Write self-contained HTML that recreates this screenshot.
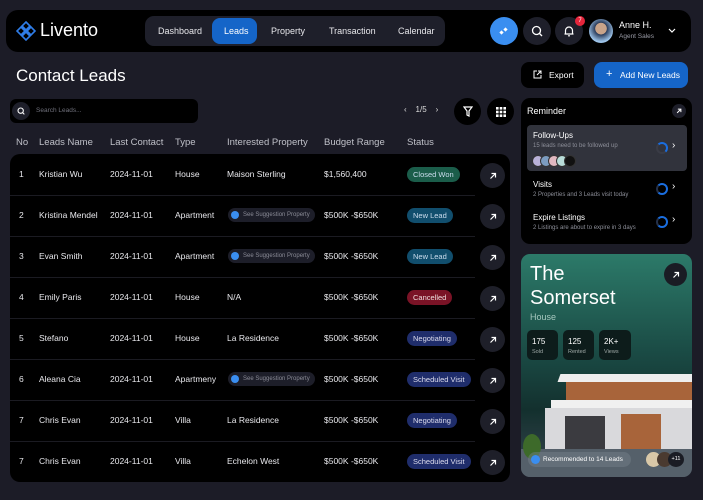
<!DOCTYPE html>
<html><head><meta charset="utf-8"><style>
*{box-sizing:border-box;margin:0;padding:0}
body{width:703px;height:500px;background:#1c1c27;font-family:"Liberation Sans",sans-serif;color:#fff;position:relative;overflow:hidden}
.a{position:absolute}
.top{left:6px;top:10px;width:685px;height:42px;background:#000;border-radius:12px}
.nav{left:145px;top:16px;width:300px;height:30px;background:#1e1f2a;border-radius:9px}
.nav span{position:absolute;top:0;line-height:30px;font-size:9px;color:#e6e6ea}
.circ{border-radius:50%;background:#1e1f2a;display:flex;align-items:center;justify-content:center}
.th{top:137px;font-size:9.5px;color:#bfc0c8}
.card{left:10px;top:154px;width:500px;height:328px;background:#000;border-radius:10px}
.row{position:absolute;left:10px;width:465px;height:41px;font-size:8.5px;color:#e8e8ec}
.row span{position:absolute;top:0;line-height:41px;white-space:nowrap}
.sep{position:absolute;left:10px;width:465px;height:1px;background:#1b1b22}
.row .badge{position:absolute;top:13px;height:15px;line-height:15px;border-radius:8px;padding:0 6px;font-size:7.5px}
.row .sug{position:absolute;top:13px;height:14px;border-radius:7px;background:#1d1e29;font-size:6px;color:#8a8b96;line-height:14px;padding:0 5px 0 15px}
.sug i{position:absolute;left:3px;top:3px;width:8px;height:8px;border-radius:50%;background:#3a8ef0}
.arr{position:absolute;left:480px;width:25px;height:25px;border-radius:50%;background:#1e1f29;display:flex;align-items:center;justify-content:center}
.ring{width:12px;height:12px;border-radius:50%;border:2px solid #1a6ee0}
</style></head><body>
<div class="a top"></div>
<svg class="a" style="left:16px;top:21px" width="20" height="20" viewBox="0 0 20 20" fill="none" stroke="#2f7de8" stroke-width="1.6"><path d="M10 1L14 5L10 9L6 5Z M5 6L9 10L5 14L1 10Z M15 6L19 10L15 14L11 10Z M10 11L14 15L10 19L6 15Z"/></svg>
<div class="a" style="left:40px;top:20px;font-size:18px;color:#fff">Livento</div>
<div class="a nav"><span style="left:13px">Dashboard</span>
<div class="a" style="left:67px;top:2px;width:45px;height:26px;background:#1565c8;border-radius:8px"></div>
<span style="left:79px;color:#fff">Leads</span><span style="left:126px">Property</span><span style="left:184px">Transaction</span><span style="left:253px">Calendar</span></div>
<div class="a circ" style="left:490px;top:17px;width:28px;height:28px;background:#3a8ef0"><svg width="10" height="10" viewBox="0 0 10 10" fill="#fff"><rect x="1" y="5" width="3" height="3" transform="rotate(45 2.5 6.5)"/><rect x="5" y="2" width="3" height="3" transform="rotate(45 6.5 3.5)"/></svg></div>
<div class="a circ" style="left:523px;top:17px;width:28px;height:28px"><svg width="12" height="12" viewBox="0 0 12 12" fill="none" stroke="#fff" stroke-width="1.3"><circle cx="5.5" cy="5.5" r="4"/><path d="M8.5 8.5L11 11"/></svg></div>
<div class="a circ" style="left:555px;top:17px;width:28px;height:28px"><svg width="12" height="12" viewBox="0 0 12 12" fill="none" stroke="#fff" stroke-width="1.2"><path d="M2.5 9V5.5a3.5 3.5 0 017 0V9zM1.5 9h9M5 10.8h2"/></svg></div>
<div class="a" style="left:575px;top:16px;width:10px;height:10px;border-radius:50%;background:#e5253b;font-size:6px;text-align:center;line-height:10px">7</div>
<div class="a" style="left:589px;top:19px;width:24px;height:24px;border-radius:50%;background:radial-gradient(circle at 50% 40%,#c9a48a 0 30%,#2a3b5a 32%,#9ec5ea 70%)"></div>
<div class="a" style="left:619px;top:20px;font-size:9px">Anne H.</div>
<div class="a" style="left:619px;top:33px;font-size:6.5px;color:#9a9ba6">Agent Sales</div>
<svg class="a" style="left:668px;top:28px" width="8" height="6" viewBox="0 0 8 6" fill="none" stroke="#fff" stroke-width="1.2"><path d="M1 1l3 3 3-3"/></svg>

<div class="a" style="left:16px;top:66px;font-size:17px">Contact Leads</div>
<div class="a" style="left:521px;top:62px;width:63px;height:26px;background:#000;border-radius:8px;font-size:8.5px;line-height:26px;padding-left:28px">Export</div>
<svg class="a" style="left:533px;top:70px" width="9" height="9" viewBox="0 0 9 9" fill="none" stroke="#fff" stroke-width="1"><path d="M4 1H1v7h7V5M5 1h3v3M8 1L4 5"/></svg>
<div class="a" style="left:594px;top:62px;width:94px;height:26px;background:#1565c8;border-radius:8px;font-size:8.5px;line-height:26px;padding-left:26px">Add New Leads</div>
<div class="a" style="left:606px;top:62px;font-size:11px;line-height:25px">+</div>

<div class="a" style="left:10px;top:99px;width:188px;height:24px;background:#000;border-radius:6px"></div>
<div class="a circ" style="left:12px;top:102px;width:18px;height:18px"><svg width="8" height="8" viewBox="0 0 12 12" fill="none" stroke="#fff" stroke-width="1.6"><circle cx="5.5" cy="5.5" r="4"/><path d="M8.5 8.5L11 11"/></svg></div>
<div class="a" style="left:36px;top:107px;font-size:6.5px;color:#70717c">Search Leads...</div>
<div class="a" style="left:404px;top:105px;font-size:8px;color:#ddd">‹&nbsp;&nbsp;&nbsp;&nbsp;1/5&nbsp;&nbsp;&nbsp;&nbsp;›</div>
<div class="a circ" style="left:454px;top:98px;width:27px;height:27px;background:#000"><svg width="10" height="11" viewBox="0 0 10 11" fill="none" stroke="#fff" stroke-width="1.2"><path d="M1 1h8L6 5v5L4 9V5z"/></svg></div>
<div class="a circ" style="left:487px;top:98px;width:27px;height:27px;background:#000"><svg width="10" height="10" viewBox="0 0 10 10" fill="#fff"><rect x="0" y="0" width="2.6" height="2.6"/><rect x="3.7" y="0" width="2.6" height="2.6"/><rect x="7.4" y="0" width="2.6" height="2.6"/><rect x="0" y="3.7" width="2.6" height="2.6"/><rect x="3.7" y="3.7" width="2.6" height="2.6"/><rect x="7.4" y="3.7" width="2.6" height="2.6"/><rect x="0" y="7.4" width="2.6" height="2.6"/><rect x="3.7" y="7.4" width="2.6" height="2.6"/><rect x="7.4" y="7.4" width="2.6" height="2.6"/></svg></div>

<div class="a th" style="left:16px">No</div><div class="a th" style="left:39px">Leads Name</div><div class="a th" style="left:110px">Last Contact</div><div class="a th" style="left:175px">Type</div><div class="a th" style="left:227px">Interested Property</div><div class="a th" style="left:324px">Budget Range</div><div class="a th" style="left:407px">Status</div>
<div class="a card"></div>

<div class="row" style="top:154px"><span style="left:9px">1</span><span style="left:29px">Kristian Wu</span><span style="left:100px">2024-11-01</span><span style="left:165px">House</span><span style="left:217px">Maison Sterling</span><span style="left:314px">$1,560,400</span><span class="badge" style="left:397px;background:#1b5d4a;color:#cde">Closed Won</span></div>
<div class="arr" style="top:163px"><svg width="8" height="8" viewBox="0 0 8 8" fill="none" stroke="#fff" stroke-width="1.2"><path d="M1.5 6.5L6.5 1.5M2.5 1.5h4v4"/></svg></div>
<div class="sep" style="top:195px"></div>
<div class="row" style="top:195px"><span style="left:9px">2</span><span style="left:29px">Kristina Mendel</span><span style="left:100px">2024-11-01</span><span style="left:165px">Apartment</span><span class="sug" style="left:218px"><i></i>See Suggestion Property</span><span style="left:314px">$500K -$650K</span><span class="badge" style="left:397px;background:#114e6d;color:#cde">New Lead</span></div>
<div class="arr" style="top:204px"><svg width="8" height="8" viewBox="0 0 8 8" fill="none" stroke="#fff" stroke-width="1.2"><path d="M1.5 6.5L6.5 1.5M2.5 1.5h4v4"/></svg></div>
<div class="sep" style="top:236px"></div>
<div class="row" style="top:236px"><span style="left:9px">3</span><span style="left:29px">Evan Smith</span><span style="left:100px">2024-11-01</span><span style="left:165px">Apartment</span><span class="sug" style="left:218px"><i></i>See Suggestion Property</span><span style="left:314px">$500K -$650K</span><span class="badge" style="left:397px;background:#114e6d;color:#cde">New Lead</span></div>
<div class="arr" style="top:245px"><svg width="8" height="8" viewBox="0 0 8 8" fill="none" stroke="#fff" stroke-width="1.2"><path d="M1.5 6.5L6.5 1.5M2.5 1.5h4v4"/></svg></div>
<div class="sep" style="top:277px"></div>
<div class="row" style="top:277px"><span style="left:9px">4</span><span style="left:29px">Emily Paris</span><span style="left:100px">2024-11-01</span><span style="left:165px">House</span><span style="left:217px">N/A</span><span style="left:314px">$500K -$650K</span><span class="badge" style="left:397px;background:#7a1326;color:#edd">Cancelled</span></div>
<div class="arr" style="top:286px"><svg width="8" height="8" viewBox="0 0 8 8" fill="none" stroke="#fff" stroke-width="1.2"><path d="M1.5 6.5L6.5 1.5M2.5 1.5h4v4"/></svg></div>
<div class="sep" style="top:318px"></div>
<div class="row" style="top:318px"><span style="left:9px">5</span><span style="left:29px">Stefano</span><span style="left:100px">2024-11-01</span><span style="left:165px">House</span><span style="left:217px">La Residence</span><span style="left:314px">$500K -$650K</span><span class="badge" style="left:397px;background:#1f2d6b;color:#dde">Negotiating</span></div>
<div class="arr" style="top:327px"><svg width="8" height="8" viewBox="0 0 8 8" fill="none" stroke="#fff" stroke-width="1.2"><path d="M1.5 6.5L6.5 1.5M2.5 1.5h4v4"/></svg></div>
<div class="sep" style="top:359px"></div>
<div class="row" style="top:359px"><span style="left:9px">6</span><span style="left:29px">Aleana Cia</span><span style="left:100px">2024-11-01</span><span style="left:165px">Apartmeny</span><span class="sug" style="left:218px"><i></i>See Suggestion Property</span><span style="left:314px">$500K -$650K</span><span class="badge" style="left:397px;background:#1f2d6b;color:#dde">Scheduled Visit</span></div>
<div class="arr" style="top:368px"><svg width="8" height="8" viewBox="0 0 8 8" fill="none" stroke="#fff" stroke-width="1.2"><path d="M1.5 6.5L6.5 1.5M2.5 1.5h4v4"/></svg></div>
<div class="sep" style="top:400px"></div>
<div class="row" style="top:400px"><span style="left:9px">7</span><span style="left:29px">Chris Evan</span><span style="left:100px">2024-11-01</span><span style="left:165px">Villa</span><span style="left:217px">La Residence</span><span style="left:314px">$500K -$650K</span><span class="badge" style="left:397px;background:#1f2d6b;color:#dde">Negotiating</span></div>
<div class="arr" style="top:409px"><svg width="8" height="8" viewBox="0 0 8 8" fill="none" stroke="#fff" stroke-width="1.2"><path d="M1.5 6.5L6.5 1.5M2.5 1.5h4v4"/></svg></div>
<div class="sep" style="top:441px"></div>
<div class="row" style="top:441px"><span style="left:9px">7</span><span style="left:29px">Chris Evan</span><span style="left:100px">2024-11-01</span><span style="left:165px">Villa</span><span style="left:217px">Echelon West</span><span style="left:314px">$500K -$650K</span><span class="badge" style="left:397px;background:#1f2d6b;color:#dde">Scheduled Visit</span></div>
<div class="arr" style="top:450px"><svg width="8" height="8" viewBox="0 0 8 8" fill="none" stroke="#fff" stroke-width="1.2"><path d="M1.5 6.5L6.5 1.5M2.5 1.5h4v4"/></svg></div>

<!-- Reminder -->
<div class="a" style="left:521px;top:98px;width:171px;height:146px;background:#000;border-radius:9px"></div>
<div class="a" style="left:527px;top:106px;font-size:9px">Reminder</div>
<div class="a circ" style="left:672px;top:104px;width:14px;height:14px"><svg width="6" height="6" viewBox="0 0 8 8" fill="none" stroke="#fff" stroke-width="1.4"><path d="M1.5 6.5L6.5 1.5M2.5 1.5h4v4"/></svg></div>
<div class="a" style="left:527px;top:125px;width:160px;height:46px;background:#31333c;border-radius:4px"></div>
<div class="a" style="left:533px;top:131px;font-size:8px">Follow-Ups</div>
<div class="a" style="left:533px;top:143px;font-size:6px;color:#8c8e98">15 leads need to be followed up</div>
<div class="a" style="left:532px;top:155px;width:60px;height:12px">
<i class="a" style="left:0;width:12px;height:12px;border-radius:50%;background:#b9b2d8;border:1px solid #333"></i>
<i class="a" style="left:8px;width:12px;height:12px;border-radius:50%;background:#7c9cc0;border:1px solid #333"></i>
<i class="a" style="left:16px;width:12px;height:12px;border-radius:50%;background:#e0b8c0;border:1px solid #333"></i>
<i class="a" style="left:24px;width:12px;height:12px;border-radius:50%;background:#b8dcd8;border:1px solid #333"></i>
<i class="a" style="left:32px;width:12px;height:12px;border-radius:50%;background:#111;border:1px solid #333"></i></div>
<div class="a ring" style="left:656px;top:142px;border-color:#1a6ee0 #1a6ee0 #3a3c46 #3a3c46"></div>
<div class="a" style="left:672px;top:140px;font-size:10px">›</div>
<div class="a" style="left:533px;top:180px;font-size:8px">Visits</div>
<div class="a" style="left:533px;top:192px;font-size:6px;color:#8c8e98">2 Properties and 3 Leads visit today</div>
<div class="a ring" style="left:656px;top:183px;border-color:#1a6ee0 #1a6ee0 #1a6ee0 #23304a"></div>
<div class="a" style="left:672px;top:181px;font-size:10px">›</div>
<div class="a" style="left:533px;top:213px;font-size:8px">Expire Listings</div>
<div class="a" style="left:533px;top:225px;font-size:6px;color:#8c8e98">2 Listings are about to expire in 3 days</div>
<div class="a ring" style="left:656px;top:216px;border-color:#1a6ee0 #1a6ee0 #1a6ee0 #23304a"></div>
<div class="a" style="left:672px;top:214px;font-size:10px">›</div>

<!-- Property card -->
<div class="a" style="left:521px;top:254px;width:171px;height:223px;border-radius:9px;overflow:hidden;background:linear-gradient(#2c7a69,#1a4a44 45%,#13302e 70%,#3a4650)">
<div class="a" style="left:38px;top:120px;width:135px;height:8px;background:#eee;transform:skewX(-20deg)"></div>
<div class="a" style="left:45px;top:128px;width:126px;height:18px;background:#a8643a"></div>
<div class="a" style="left:30px;top:146px;width:141px;height:8px;background:#f0f0f0"></div>
<div class="a" style="left:24px;top:154px;width:147px;height:45px;background:#d9d9dc"></div>
<div class="a" style="left:44px;top:162px;width:40px;height:37px;background:#3b3b40"></div>
<div class="a" style="left:100px;top:160px;width:40px;height:38px;background:#a8643a"></div>
<div class="a" style="left:0;top:195px;width:171px;height:28px;background:#55606a"></div>
<div class="a" style="left:2px;top:180px;width:18px;height:25px;border-radius:50%;background:#3d6a2a"></div>
</div>
<div class="a" style="left:530px;top:262px;font-size:20px;line-height:24px">The<br>Somerset</div>
<div class="a" style="left:530px;top:312px;font-size:9px;color:#a6c8bf">House</div>
<div class="a circ" style="left:664px;top:263px;width:23px;height:23px;background:#1a1c24"><svg width="8" height="8" viewBox="0 0 8 8" fill="none" stroke="#fff" stroke-width="1.2"><path d="M1.5 6.5L6.5 1.5M2.5 1.5h4v4"/></svg></div>
<div class="a" style="left:527px;top:330px;width:31px;height:30px;background:#0d1c1b;border-radius:5px"><div style="font-size:8px;margin:7px 0 0 5px">175</div><div style="font-size:5.5px;color:#a0aaa8;margin:3px 0 0 5px">Sold</div></div>
<div class="a" style="left:563px;top:330px;width:31px;height:30px;background:#0d1c1b;border-radius:5px"><div style="font-size:8px;margin:7px 0 0 5px">125</div><div style="font-size:5.5px;color:#a0aaa8;margin:3px 0 0 5px">Rented</div></div>
<div class="a" style="left:599px;top:330px;width:32px;height:30px;background:#0d1c1b;border-radius:5px"><div style="font-size:8px;margin:7px 0 0 5px">2K+</div><div style="font-size:5.5px;color:#a0aaa8;margin:3px 0 0 5px">Views</div></div>
<div class="a" style="left:528px;top:452px;width:103px;height:15px;border-radius:8px;background:rgba(120,130,140,.45);font-size:6.5px;line-height:15px;padding-left:15px">Recommended to 14 Leads</div>
<div class="a" style="left:531px;top:455px;width:9px;height:9px;border-radius:50%;background:#3a8ef0"></div>
<div class="a" style="left:646px;top:452px;width:15px;height:15px;border-radius:50%;background:#d9c8a8"></div>
<div class="a" style="left:657px;top:452px;width:15px;height:15px;border-radius:50%;background:#4a3a30"></div>
<div class="a" style="left:668px;top:452px;width:16px;height:15px;border-radius:50%;background:#1a1c24;font-size:5.5px;text-align:center;line-height:15px">+11</div>
</body></html>
